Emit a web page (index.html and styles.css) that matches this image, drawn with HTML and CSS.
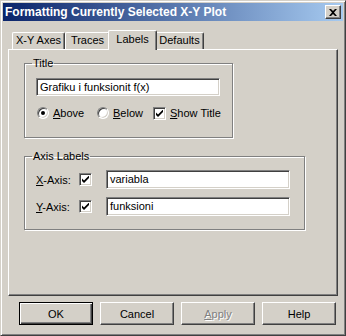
FILE: index.html
```html
<!DOCTYPE html>
<html lang="en">
<head>
    <meta charset="UTF-8">
    <title>Formatting Currently Selected X-Y Plot</title>
    <link rel="stylesheet" href="styles.css">
</head>
<body>
    <div class="window">
        <div class="caption">
            <span class="caption-text">Formatting Currently Selected X-Y Plot</span>
            <div class="close">
                <svg width="8" height="7" viewBox="0 0 8 7"><path d="M0 0h2l2 2 2-2h2L5 3.5 8 7H6L4 5 2 7H0l3-3.5z" fill="#000"/></svg>
            </div>
        </div>
        <div class="body">
            <div class="tabs">
                <div class="tab tab-axes">X-Y Axes</div>
                <div class="tab tab-traces">Traces</div>
                <div class="tab tab-labels active">Labels</div>
                <div class="tab tab-defaults">Defaults</div>
            </div>
            <div class="panel">
                <fieldset class="group group-title">
                    <legend>Title</legend>
                    <div class="edit edit-title">Grafiku i funksionit f(x)</div>
                    <div class="options">
                        <div class="opt opt-above"><span class="radio on"></span><span><u>A</u>bove</span></div>
                        <div class="opt opt-below"><span class="radio"></span><span><u>B</u>elow</span></div>
                        <div class="opt"><span class="check"><svg width="7" height="7" viewBox="0 0 7 7"><path d="M0 2.5l2 2 5-5v2.5l-5 5-2-2z" fill="#000"/></svg></span><span><u>S</u>how Title</span></div>
                    </div>
                </fieldset>
                <fieldset class="group group-axis">
                    <legend>Axis Labels</legend>
                    <div class="axis-row">
                        <span class="axis-label"><u>X</u>-Axis:</span>
                        <span class="check"><svg width="7" height="7" viewBox="0 0 7 7"><path d="M0 2.5l2 2 5-5v2.5l-5 5-2-2z" fill="#000"/></svg></span>
                        <div class="edit edit-axis">variabla</div>
                    </div>
                    <div class="axis-row">
                        <span class="axis-label"><u>Y</u>-Axis:</span>
                        <span class="check"><svg width="7" height="7" viewBox="0 0 7 7"><path d="M0 2.5l2 2 5-5v2.5l-5 5-2-2z" fill="#000"/></svg></span>
                        <div class="edit edit-axis">funksioni</div>
                    </div>
                </fieldset>
            </div>
            <div class="buttons">
                <div class="btn default"><span>OK</span></div>
                <div class="btn">Cancel</div>
                <div class="btn disabled"><u>A</u>pply</div>
                <div class="btn">Help</div>
            </div>
        </div>
    </div>
</body>
</html>
```

FILE: styles.css
```css
body {
    margin: 0;
    background: #d4d0c8;
    font-family: "Liberation Sans", Arial, sans-serif;
    font-size: 11px;
    color: #000;
}

.window {
    width: 346px;
    height: 336px;
    box-sizing: border-box;
    background: #d4d0c8;
    border: 1px solid;
    border-color: #d4d0c8 #404040 #404040 #d4d0c8;
    box-shadow: inset 1px 1px #fff, inset -1px -1px #808080;
    padding: 2px;
}

/* title bar */
.caption {
    height: 18px;
    display: flex;
    align-items: center;
    justify-content: space-between;
    padding: 0 2px;
    background: linear-gradient(to right, #0a246a, #a6caf0);
}

.caption-text {
    color: #fff;
    font-weight: bold;
    font-size: 12px;
}

.close {
    width: 16px;
    height: 14px;
    box-sizing: border-box;
    display: flex;
    align-items: center;
    justify-content: center;
    background: #d4d0c8;
    border: 1px solid;
    border-color: #fff #404040 #404040 #fff;
    box-shadow: inset -1px -1px #808080;
}

.body {
    padding: 9px 5px 0 5px;
}

/* tabs */
.tabs {
    display: flex;
    align-items: flex-end;
    height: 19px;
    padding-left: 4px;
}

.tab {
    height: 17px;
    box-sizing: border-box;
    text-align: center;
    line-height: 15px;
    border: 1px solid;
    border-bottom: none;
    border-color: #fff #404040 #404040 #fff;
    border-radius: 2px 2px 0 0;
    box-shadow: inset -1px 0 #808080;
}

.tab-axes { width: 53px; }
.tab-traces { width: 45px; }
.tab-labels { width: 45px; }
.tab-defaults { width: 49px; }

.tab.active {
    position: relative;
    z-index: 1;
    width: 49px;
    height: 20px;
    margin: 0 -2px -1px;
    line-height: 16px;
    background: #d4d0c8;
}

.panel {
    height: 247px;
    box-sizing: border-box;
    border: 1px solid;
    border-color: #fff #404040 #404040 #fff;
    box-shadow: inset -1px -1px #808080;
    padding: 7px 0 0 15px;
}

/* group boxes */
.group {
    margin: 0;
    padding: 0;
    box-sizing: border-box;
    border: 1px solid #808080;
    box-shadow: inset 1px 1px #fff, 1px 1px #fff;
}

.group legend {
    margin-left: -4px;
    padding: 0 1px;
    line-height: 13px;
}

.group-title {
    width: 209px;
    height: 81px;
    padding: 8px 0 0 11px;
}

.group-axis {
    width: 281px;
    height: 80px;
    margin-top: 12px;
    padding: 7px 0 0 11px;
}

.edit {
    box-sizing: border-box;
    background: #fff;
    border: 1px solid;
    border-color: #808080 #fff #fff #808080;
    box-shadow: inset 1px 1px #404040, inset -1px -1px #d4d0c8;
    padding: 0 3px;
    line-height: 16px;
}

.edit-title {
    width: 184px;
    height: 18px;
}

.edit-axis {
    width: 184px;
    height: 19px;
    line-height: 17px;
}

.options {
    display: flex;
    align-items: center;
    height: 14px;
    margin-top: 10px;
    padding-left: 1px;
}

.opt {
    display: flex;
    align-items: center;
    gap: 4px;
}

.opt-above {
    width: 60px;
}

.opt-below {
    width: 56px;
}

.radio {
    width: 12px;
    height: 12px;
    box-sizing: border-box;
    border-radius: 50%;
    background: #fff;
    border: 1px solid;
    border-color: #808080 #fff #fff #808080;
    box-shadow: inset 1px 1px #404040, inset -1px -1px #d4d0c8;
    display: flex;
    align-items: center;
    justify-content: center;
}

.radio.on::after {
    content: '';
    width: 4px;
    height: 4px;
    border-radius: 50%;
    background: #000;
}

.check {
    width: 13px;
    height: 13px;
    box-sizing: border-box;
    background: #fff;
    border: 1px solid;
    border-color: #808080 #fff #fff #808080;
    box-shadow: inset 1px 1px #404040, inset -1px -1px #d4d0c8;
    display: flex;
    align-items: center;
    justify-content: center;
}

.axis-row {
    display: flex;
    align-items: center;
    margin-bottom: 8px;
}

.axis-label {
    width: 43px;
}

.axis-row .check {
    margin-right: 14px;
}

/* buttons */
.buttons {
    display: flex;
    justify-content: flex-end;
    gap: 7px;
    margin-top: 6px;
    padding-right: 2px;
}

.btn {
    width: 74px;
    height: 23px;
    box-sizing: border-box;
    display: flex;
    align-items: center;
    justify-content: center;
    border: 1px solid;
    border-color: #fff #404040 #404040 #fff;
    box-shadow: inset -1px -1px #808080;
}

.btn.default {
    border: 1px solid #000;
    box-shadow: inset 1px 1px #fff, inset -1px -1px #404040, inset -2px -2px #808080;
}

.btn.disabled {
    color: #808080;
    text-shadow: 1px 1px #fff;
}
```
